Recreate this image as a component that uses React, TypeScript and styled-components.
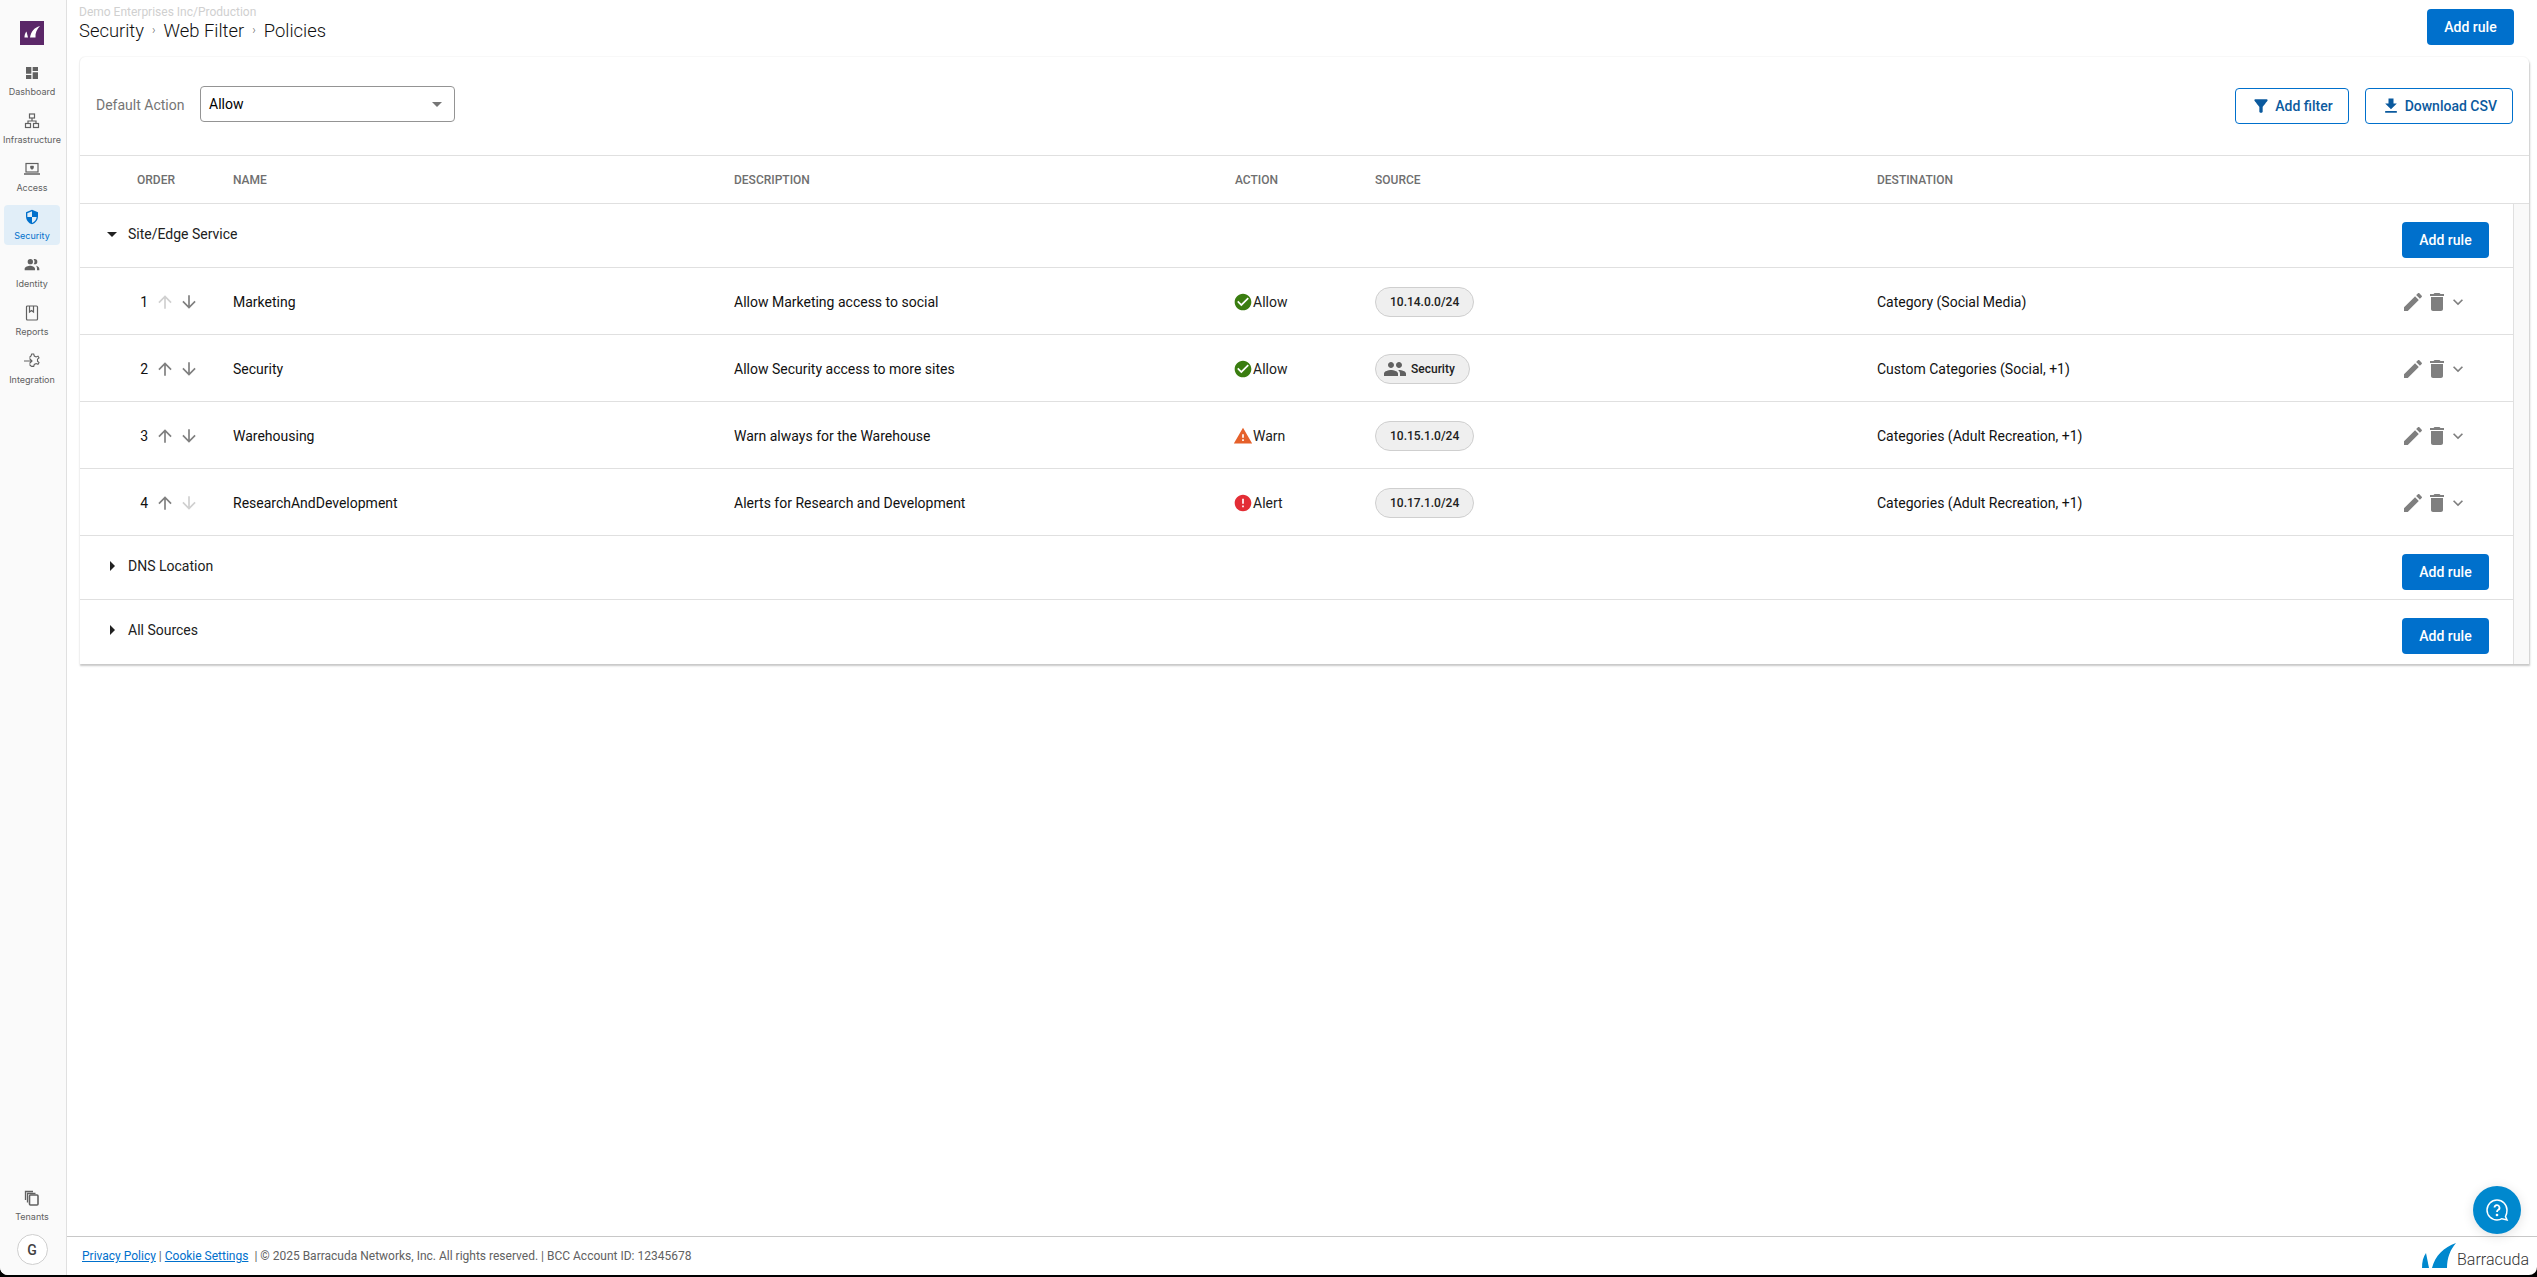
import React from "react";
import styled, {createGlobalStyle} from "styled-components";

const GlobalStyle = createGlobalStyle`
  html, body {
    margin: 0;
    padding: 0;
    height: 100%;
    background: #000;
    overflow: hidden;
  }
  body {
    font-family: Roboto, "Liberation Sans", sans-serif;
    font-size: 14px;
    color: #000;
  }
`;

const Icon = ({d, size = 24, color = "currentColor"}: {d: string; size?: number; color?: string}) => (
  <svg width={size} height={size} viewBox="0 0 24 24" fill={color} style={{flexShrink: 0, display: "block"}}>
    <path d={d}/>
  </svg>
);

const paths = {
  edit: "M3 17.25V21h3.75L17.81 9.94l-3.75-3.75L3 17.25zM20.71 7.04c.39-.39.39-1.02 0-1.41l-2.34-2.34c-.39-.39-1.02-.39-1.41 0l-1.83 1.83 3.75 3.75 1.83-1.83z",
  trash: "M6 19c0 1.1.9 2 2 2h8c1.1 0 2-.9 2-2V7H6v12zM19 4h-3.5l-1-1h-5l-1 1H5v2h14V4z",
  up: "M4 12l1.41 1.41L11 7.83V20h2V7.83l5.58 5.59L20 12l-8-8-8 8z",
  down: "M20 12l-1.41-1.41L13 16.17V4h-2v12.17l-5.58-5.59L4 12l8 8 8-8z",
  expand: "M16.59 8.59L12 13.17 7.41 8.59 6 10l6 6 6-6z",
  dropDown: "M7 10l5 5 5-5z",
  dropRight: "M10 17l5-5-5-5v10z",
  filter: "M4.25 5.61C6.27 8.2 10 13 10 13v6c0 .55.45 1 1 1h2c.55 0 1-.45 1-1v-6s3.72-4.8 5.74-7.39c.51-.66.04-1.61-.79-1.61H5.04c-.83 0-1.3.95-.79 1.61z",
  download: "M19 9h-4V3H9v6H5l7 7 7-7zM5 18v2h14v-2H5z",
  people: "M16 11c1.66 0 2.99-1.34 2.99-3S17.66 5 16 5c-1.66 0-3 1.34-3 3s1.34 3 3 3zm-8 0c1.66 0 2.99-1.34 2.99-3S9.66 5 8 5C6.34 5 5 6.34 5 8s1.34 3 3 3zm0 2c-2.33 0-7 1.17-7 3.5V19h14v-2.5c0-2.33-4.67-3.5-7-3.5zm8 0c-.29 0-.62.02-.97.05 1.16.84 1.97 1.97 1.97 3.45V19h6v-2.5c0-2.33-4.67-3.5-7-3.5z",
  check: "M12 2C6.48 2 2 6.48 2 12s4.48 10 10 10 10-4.48 10-10S17.52 2 12 2zm-2 15l-5-5 1.41-1.41L10 14.17l7.59-7.59L19 8l-9 9z",
  warn: "M1 21h22L12 2 1 21zm12-3h-2v-2h2v2zm0-4h-2v-4h2v4z",
  error: "M12 2C6.48 2 2 6.48 2 12s4.48 10 10 10 10-4.48 10-10S17.52 2 12 2zm1 15h-2v-2h2v2zm0-4h-2V7h2v6z",
  dashboard: "M3 13h8V3H3v10zm0 8h8v-6H3v6zm10 0h8V11h-8v10zm0-18v6h8V3h-8z",
  shield: "M12 1L3 5v6c0 5.55 3.84 10.74 9 12 5.16-1.26 9-6.45 9-12V5l-9-4zm0 10.99h7c-.53 4.12-3.28 7.79-7 8.94V12H5V6.3l7-3.11v8.8z",
  identity: "M9.5 11a4 4 0 1 0 0-8 4 4 0 0 0 0 8zm0 2C6.3 13 1 14.500 1 17.500V20h15.500v-2.500c0-3-4.800-4.500-7-4.500zm6.500-2a4 4 0 0 0 0-8c-.6 0-1.100.1-1.600.3a6 6 0 0 1 0 7.400c.5.2 1 .3 1.600.3zm1.800 2.300c1.400 1 1.700 2.600 1.700 4.200V20H23v-2.500c0-2.200-3-3.700-5.200-4.200z",
};

const InfraIcon = () => (
  <svg width={16} height={16} viewBox="0 0 16 16" fill="none" stroke="#616161" strokeWidth="1.2">
    <rect x="5.5" y="1" width="5" height="4"/>
    <rect x="1.5" y="10.5" width="5" height="4"/>
    <rect x="9.5" y="10.5" width="5" height="4"/>
    <path d="M8 5v3M4 10.5V8h8v2.5"/>
  </svg>
);

const AccessIcon = () => (
  <svg width={16} height={16} viewBox="0 0 16 16" fill="none" stroke="#616161" strokeWidth="1.2">
    <rect x="2" y="2.5" width="12" height="8.5"/>
    <path d="M0 13h16" strokeWidth="1.5"/>
    <path d="M6.5 5h3v2.2L8 8.5 6.500 7.200z" fill="#616161" strokeWidth=".5"/>
  </svg>
);

const ReportsIcon = () => (
  <svg width={16} height={16} viewBox="0 0 16 16" fill="none" stroke="#616161" strokeWidth="1.2">
    <rect x="2.5" y="1" width="11" height="14" rx="1"/>
    <path d="M5.5 1v6l2-1.500 2 1.500V1"/>
  </svg>
);

const IntegrationIcon = () => (
  <svg width={16} height={16} viewBox="0 0 16 16" fill="none" stroke="#616161" strokeWidth="1.1">
    <path d="M5.5 4.5 7 3l.7-2h2l.6 2 1.800.9 1.900-.8 1 1.700-1.500 1.400v2l1.500 1.400-1 1.700-1.900-.8-1.800.9-.6 2h-2L7 13l-1.500-1.500"/>
    <path d="M0 8h8M5.5 5.500 8 8l-2.500 2.500"/>
  </svg>
);

const TenantsIcon = () => (
  <svg width={16} height={16} viewBox="0 0 16 16" fill="none" stroke="#616161" strokeWidth="1.3">
    <rect x="5.5" y="5" width="8.5" height="10" rx="1" strokeWidth="1.6"/>
    <path d="M3.5 12.500V3.500h8M1.500 10V1.500h7.500"/>
  </svg>
);

const navItems = [
  {label: "Dashboard", icon: <Icon d={paths.dashboard} size={16}/>},
  {label: "Infrastructure", icon: <InfraIcon/>},
  {label: "Access", icon: <AccessIcon/>},
  {label: "Security", icon: <Icon d={paths.shield} size={16}/>, active: true},
  {label: "Identity", icon: <Icon d={paths.identity} size={16}/>},
  {label: "Reports", icon: <ReportsIcon/>},
  {label: "Integration", icon: <IntegrationIcon/>},
];

const rules = [
  {order: 1, name: "Marketing", description: "Allow Marketing access to social", action: "Allow", source: "10.14.0.0/24", destination: "Category (Social Media)", upOff: true},
  {order: 2, name: "Security", description: "Allow Security access to more sites", action: "Allow", source: "Security", group: true, destination: "Custom Categories (Social, +1)"},
  {order: 3, name: "Warehousing", description: "Warn always for the Warehouse", action: "Warn", source: "10.15.1.0/24", destination: "Categories (Adult Recreation, +1)"},
  {order: 4, name: "ResearchAndDevelopment", description: "Alerts for Research and Development", action: "Alert", source: "10.17.1.0/24", destination: "Categories (Adult Recreation, +1)", downOff: true},
];

const actionIcons: Record<string, {d: string; color: string}> = {
  Allow: {d: paths.check, color: "#3a7d10"},
  Warn: {d: paths.warn, color: "#e5602a"},
  Alert: {d: paths.error, color: "#e32d35"},
};

const AddRule = () => <PrimaryButton>Add rule</PrimaryButton>;

export default function App() {
  return (
    <Page>
      <GlobalStyle/>
      <Sidebar>
        <LogoBox>
          <svg width={16} height={14} viewBox="0 0 16 14" fill="#fff">
            <path d="M16 0C10 1.500 7 6 6 11.500h5.500C11 7 13 3 16 0z"/>
            <path d="M2.500 5.500 4 11.500H0.500C0.500 9 1 7 2.500 5.500z"/>
          </svg>
        </LogoBox>
        <Nav>
          {navItems.map((item) => (
            <NavItem key={item.label} $active={item.active}>
              {item.icon}
              <NavLabel>{item.label}</NavLabel>
            </NavItem>
          ))}
        </Nav>
        <NavItem>
          <TenantsIcon/>
          <NavLabel>Tenants</NavLabel>
        </NavItem>
        <Avatar>G</Avatar>
      </Sidebar>
      <Main>
        <Header>
          <div>
            <Account>Demo Enterprises Inc/Production</Account>
            <Crumbs>
              <span>Security</span><Sep>›</Sep><span>Web Filter</span><Sep>›</Sep><span>Policies</span>
            </Crumbs>
          </div>
          <AddRule/>
        </Header>
        <Card>
          <Toolbar>
            <ToolbarLabel>Default Action</ToolbarLabel>
            <Select>
              Allow
              <Icon d={paths.dropDown} size={24} color="#757575"/>
            </Select>
            <ToolbarActions>
              <OutlineButton><Icon d={paths.filter} size={20}/>Add filter</OutlineButton>
              <OutlineButton><Icon d={paths.download} size={20}/>Download CSV</OutlineButton>
            </ToolbarActions>
          </Toolbar>
          <TableHead>
            <span/>
            <HeadCell>Order</HeadCell>
            <HeadCell>Name</HeadCell>
            <HeadCell>Description</HeadCell>
            <HeadCell>Action</HeadCell>
            <HeadCell>Source</HeadCell>
            <HeadCell>Destination</HeadCell>
          </TableHead>
          <TableBody>
            <Rows>
              <GroupRow>
                <GroupTitle><Icon d={paths.dropDown} size={24} color="#212121"/>Site/Edge Service</GroupTitle>
                <AddRule/>
              </GroupRow>
              {rules.map((rule) => {
                const act = actionIcons[rule.action];
                return (
                  <RuleRow key={rule.order}>
                    <span/>
                    <OrderCell>
                      <OrderNumber>{rule.order}</OrderNumber>
                      <Icon d={paths.up} size={20} color={rule.upOff ? "#d0d0d0" : "#7f7f7f"}/>
                      <Icon d={paths.down} size={20} color={rule.downOff ? "#d0d0d0" : "#7f7f7f"}/>
                    </OrderCell>
                    <Cell>{rule.name}</Cell>
                    <Cell>{rule.description}</Cell>
                    <ActionCell>
                      <Icon d={act.d} size={20} color={act.color}/>
                      {rule.action}
                    </ActionCell>
                    <Cell>
                      <Chip $group={rule.group}>
                        {rule.group ? <Icon d={paths.people} size={24} color="#616161"/> : undefined}
                        {rule.source}
                      </Chip>
                    </Cell>
                    <Cell>{rule.destination}</Cell>
                    <RowActions>
                      <Icon d={paths.edit} size={24} color="#7f7f7f"/>
                      <Icon d={paths.trash} size={24} color="#7f7f7f"/>
                      <Chevron><Icon d={paths.expand} size={20} color="#7f7f7f"/></Chevron>
                    </RowActions>
                  </RuleRow>
                );
              })}
              <GroupRow>
                <GroupTitle><Icon d={paths.dropRight} size={24} color="#212121"/>DNS Location</GroupTitle>
                <AddRule/>
              </GroupRow>
              <GroupRow $last>
                <GroupTitle><Icon d={paths.dropRight} size={24} color="#212121"/>All Sources</GroupTitle>
                <AddRule/>
              </GroupRow>
            </Rows>
            <Gutter/>
          </TableBody>
        </Card>
        <Spacer/>
        <Footer>
          <FooterText>
            <a>Privacy Policy</a> | <a>Cookie Settings</a> &nbsp;| © 2025 Barracuda Networks, Inc. All rights reserved. | BCC Account ID: 12345678
          </FooterText>
          <Brand>
            <svg width={34} height={25} viewBox="0 0 34 25" fill="#0088ce">
              <path d="M34 0C22 4 13 13 10 25h15C25 15 28 7 34 0z"/>
              <path d="M4 10 7 25H0C0 19 1 14 4 10z"/>
            </svg>
            <BrandName>Barracuda</BrandName>
          </Brand>
        </Footer>
        <ChatButton>
          <svg width={24} height={24} viewBox="0 0 24 24" fill="none" stroke="#fff" strokeWidth="1.5">
            <path d="M20.5 18.5c1-1.800 1.500-3.700 1.500-6.500a10 10 0 1 0-10 10c2 0 3.700-.5 5-1.300l5 1.300z"/>
            <path d="M9.5 9.500A2.500 2.500 0 1 1 13 12c-.8.5-1 1-1 2" strokeWidth="1.8"/>
            <circle cx="12" cy="17" r=".6" fill="#fff"/>
          </svg>
        </ChatButton>
      </Main>
    </Page>
  );
}

const Page = styled.div`
  display: flex;
  height: 1275px;
  background: #fff;
  overflow: hidden;
  border-radius: 0 0 8px 8px;
  position: relative;
`;

const Sidebar = styled.aside`
  width: 67px;
  flex-shrink: 0;
  box-sizing: border-box;
  background: #fafafa;
  border-right: 1px solid #e0e0e0;
  display: flex;
  flex-direction: column;
  align-items: center;
  padding: 21px 2px 10px 0;
`;

const LogoBox = styled.div`
  width: 24px;
  height: 24px;
  background: #5b2768;
  display: flex;
  align-items: center;
  justify-content: center;
  margin-bottom: 16px;
`;

const Nav = styled.nav`
  flex: 1;
  display: flex;
  flex-direction: column;
  gap: 8px;
`;

const NavItem = styled.div<{$active?: boolean}>`
  width: 56px;
  height: 40px;
  box-sizing: border-box;
  border-radius: 4px;
  padding-top: 4px;
  display: flex;
  flex-direction: column;
  align-items: center;
  gap: 5px;
  color: ${(p) => (p.$active ? "#0070cc" : "#616161")};
  background: ${(p) => (p.$active ? "#e1eef8" : "transparent")};
`;

const NavLabel = styled.span`
  font-family: Inter, Roboto, sans-serif;
  font-size: 9px;
  line-height: 11px;
  white-space: nowrap;
`;

const Avatar = styled.div`
  width: 31px;
  height: 31px;
  box-sizing: border-box;
  border: 1px solid #cfcfcf;
  border-radius: 50%;
  background: #fff;
  color: #424242;
  font-size: 14px;
  font-weight: 500;
  display: flex;
  align-items: center;
  justify-content: center;
  margin-top: 8px;
`;

const Main = styled.main`
  flex: 1;
  min-width: 0;
  display: flex;
  flex-direction: column;
`;

const Header = styled.header`
  height: 57px;
  flex-shrink: 0;
  box-sizing: border-box;
  padding: 6px 23px 0 12px;
  display: flex;
  justify-content: space-between;
  align-items: flex-start;
`;

const Account = styled.div`
  font-size: 12px;
  line-height: 13px;
  color: #d0d0d0;
`;

const Crumbs = styled.div`
  font-size: 18.4px;
  font-weight: 300;
  line-height: 23px;
  color: #111;
  display: flex;
  align-items: center;
`;

const Sep = styled.span`
  font-size: 12px;
  color: #616161;
  margin: 0 8px;
`;

const PrimaryButton = styled.button`
  width: 87px;
  height: 36px;
  margin-top: 3px;
  border: 0;
  border-radius: 4px;
  background: #0070cc;
  color: #fff;
  font-family: inherit;
  font-size: 14px;
  font-weight: 500;
  padding: 0;
  flex-shrink: 0;
`;

const Card = styled.section`
  margin: 0 8px 0 12px;
  border-left: 1px solid #f0f0f0;
  border-radius: 6px 6px 0 0;
  box-shadow: 1px 2px 2px rgba(0, 0, 0, 0.22), 0 -1px 1px rgba(0, 0, 0, 0.03);
  background: #fff;
  overflow: hidden;
`;

const Toolbar = styled.div`
  height: 98px;
  box-sizing: border-box;
  padding: 0 16px 0 16px;
  display: flex;
  align-items: center;
`;

const ToolbarLabel = styled.span`
  color: #757575;
  font-size: 14px;
  width: 104px;
  margin-bottom: 2px;
`;

const Select = styled.div`
  width: 255px;
  height: 36px;
  margin-bottom: 4px;
  box-sizing: border-box;
  border: 1px solid #949494;
  border-radius: 4px;
  padding: 0 5px 0 8px;
  display: flex;
  align-items: center;
  justify-content: space-between;
  font-size: 14px;
`;

const ToolbarActions = styled.div`
  margin-left: auto;
  display: flex;
  gap: 16px;
`;

const OutlineButton = styled.button`
  height: 36px;
  box-sizing: border-box;
  padding: 0 15px;
  display: flex;
  align-items: center;
  gap: 4px;
  border: 1px solid #0070cc;
  border-radius: 4px;
  background: #fff;
  color: #0b5a9e;
  font-family: inherit;
  font-size: 14px;
  font-weight: 500;
`;

const columns = "32px 96px 501px 501px 140px 502px 501px 96px 64px";

const TableHead = styled.div`
  display: grid;
  grid-template-columns: ${columns};
  height: 49px;
  box-sizing: border-box;
  border-top: 1px solid #e0e0e0;
  border-bottom: 1px solid #e0e0e0;
  align-items: center;
`;

const HeadCell = styled.div`
  padding-left: 25px;
  font-size: 12px;
  font-weight: 500;
  color: #6f6f6f;
  text-transform: uppercase;
`;

const TableBody = styled.div`
  display: flex;
`;

const Rows = styled.div`
  width: 2433px;
  flex-shrink: 0;
`;

const Gutter = styled.div`
  flex: 1;
  background: #f9f9f9;
  border-left: 1px solid #e0e0e0;
`;

const GroupRow = styled.div<{$last?: boolean}>`
  height: 64px;
  box-sizing: border-box;
  padding: 15px 24px 0 20px;
  display: flex;
  justify-content: space-between;
  align-items: flex-start;
  border-bottom: ${(p) => (p.$last ? "0" : "1px solid #e0e0e0")};
`;

const GroupTitle = styled.div`
  display: flex;
  align-items: center;
  gap: 4px;
  margin-top: 3px;
  color: #212121;
  font-size: 14px;
  line-height: 24px;
`;

const RuleRow = styled.div`
  display: grid;
  grid-template-columns: ${columns};
  height: 67px;
  box-sizing: border-box;
  padding-top: 2px;
  border-bottom: 1px solid #e0e0e0;
  align-items: center;
`;

const Cell = styled.div`
  padding-left: 25px;
  font-size: 14px;
  color: #111;
`;

const OrderCell = styled(Cell)`
  display: flex;
  align-items: center;
  gap: 4px;
`;

const OrderNumber = styled.span`
  width: 13px;
  margin-right: 1px;
  text-align: right;
  padding-right: 2px;
  box-sizing: border-box;
`;

const ActionCell = styled(Cell)`
  padding-left: 23px;
  display: flex;
  align-items: center;
  color: #212121;
`;

const Chip = styled.span<{$group?: boolean}>`
  display: inline-flex;
  align-items: center;
  gap: 4px;
  height: 30px;
  box-sizing: border-box;
  padding: ${(p) => (p.$group ? "0 14px 0 7px" : "0 14px")};
  border: 1px solid #cfcfcf;
  border-radius: 15px;
  background: #efefef;
  font-size: 12px;
  font-weight: 500;
  color: #212121;
`;

const RowActions = styled.div`
  display: flex;
  align-items: center;
  padding-left: 48px;
  margin-right: -48px;
`;

const Chevron = styled.span`
  margin-left: -1px;
`;

const Spacer = styled.div`
  flex: 1;
`;

const Footer = styled.footer`
  height: 39px;
  flex-shrink: 0;
  box-sizing: border-box;
  border-top: 1px solid #c8c8c8;
  padding: 0 8px 0 15px;
  display: flex;
  justify-content: space-between;
`;

const FooterText = styled.div`
  padding-top: 11px;
  font-size: 12px;
  line-height: 16px;
  color: #616161;
  a {
    color: #0070cc;
    text-decoration: underline;
  }
`;

const Brand = styled.div`
  display: flex;
  align-items: flex-start;
  padding-top: 6px;
  overflow: hidden;
  height: 25px;
`;

const BrandName = styled.span`
  font-size: 16px;
  font-weight: 300;
  color: #333;
  margin-left: 1px;
  margin-top: 7px;
`;

const ChatButton = styled.div`
  position: absolute;
  right: 16px;
  bottom: 41px;
  width: 48px;
  height: 48px;
  border-radius: 50%;
  background: #0088ce;
  box-shadow: 0 2px 12px rgba(0, 0, 0, 0.12);
  display: flex;
  align-items: center;
  justify-content: center;
`;
